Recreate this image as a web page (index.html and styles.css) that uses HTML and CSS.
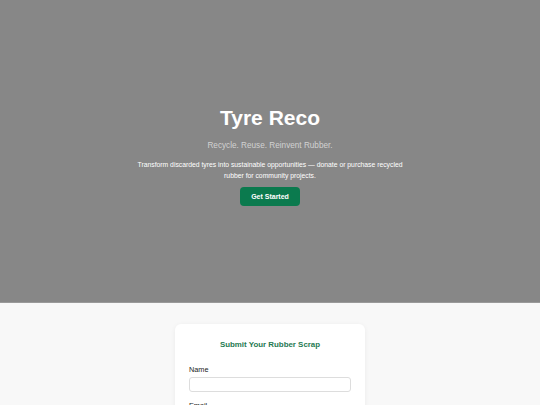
FILE: index.html
```html
<!DOCTYPE html>
<html>
<head>
  <link rel="stylesheet" href="styles.css">
</head>
<body>
  <header class="hero">
    <h1>Tyre Reco</h1>
    <p class="tagline">Recycle. Reuse. Reinvent Rubber.</p>
    <p class="intro">Transform discarded tyres into sustainable opportunities — donate or purchase recycled rubber for community projects.</p>
    <a class="cta" href="#submit">Get Started</a>
  </header>

  <section class="submit" id="submit">
    <form class="card">
      <h2>Submit Your Rubber Scrap</h2>
      <label for="name">Name</label>
      <input type="text" id="name">
      <label for="email">Email</label>
      <input type="email" id="email">
    </form>
  </section>
</body>
</html>
```

FILE: styles.css
```css
body {
  margin: 0;
  background: #f8f8f8;
  font-family: "Liberation Sans", Arial, sans-serif;
}

.hero {
  height: 303px;
  box-sizing: border-box;
  padding-top: 10px;
  background: #878787;
  border-bottom: 1px solid #9a9a9a;
  display: flex;
  flex-direction: column;
  align-items: center;
  justify-content: center;
  text-align: center;
  color: #fff;
}

.hero h1 {
  margin: 0 0 11px;
  font-size: 21px;
  font-weight: bold;
}

.tagline {
  margin: 0 0 9px;
  font-size: 8.2px;
  color: #d2d2d2;
}

.intro {
  margin: 0 0 6px;
  max-width: 270px;
  font-size: 6.8px;
  line-height: 11px;
}

.cta {
  display: inline-block;
  padding: 6px 11px;
  background: #0b7a4e;
  color: #fff;
  font-size: 7px;
  font-weight: bold;
  text-decoration: none;
  border-radius: 4px;
}

.submit {
  display: flex;
  justify-content: center;
  padding-top: 21px;
}

.card {
  width: 162px;
  padding: 16px 14px 14px;
  background: #fff;
  border-radius: 6px;
  box-shadow: 0 1px 5px rgba(0,0,0,0.06);
}

.card h2 {
  margin: 0 0 16px;
  text-align: center;
  color: #1f7a52;
  font-size: 7.9px;
}

.card label {
  display: block;
  margin-bottom: 3px;
  font-size: 7.3px;
  color: #222;
}

.card input {
  display: block;
  width: 100%;
  box-sizing: border-box;
  height: 15px;
  margin: 0 0 9px;
  border: 1px solid #ddd;
  border-radius: 3px;
}
```
